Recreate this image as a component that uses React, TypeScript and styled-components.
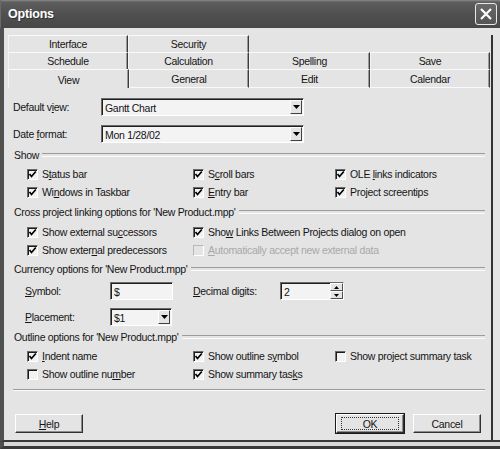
import React from "react";
import styled, { createGlobalStyle, css } from "styled-components";

const GlobalStyle = createGlobalStyle`
  html, body { margin: 0; padding: 0; background: #e4e4e4; }
  body { font-family: "Liberation Sans", Arial, sans-serif; }
  * { box-sizing: border-box; }
`;

const Window = styled.div`
  width: 500px;
  height: 449px;
  display: flex;
  flex-direction: column;
  background: #e4e4e4;
  font-family: "Liberation Sans", Arial, sans-serif;
  font-size: 10.5px;
  letter-spacing: -0.3px;
  color: #141414;
  overflow: hidden;
`;

const TitleBar = styled.div`
  height: 28px;
  flex: none;
  display: flex;
  align-items: center;
  justify-content: space-between;
  padding: 0 3px 0 7px;
  background: linear-gradient(#8a8a8a 0, #5e5e5e 2px, #515151 45%, #474747 100%);
  border-left: 1px solid #6a6a6a;
`;

const Title = styled.span`
  color: #fff;
  font-weight: bold;
  font-size: 12.5px;
  letter-spacing: -0.2px;
  text-shadow: 1px 1px 0 #333;
`;

const CloseButton = styled.div`
  width: 22px;
  height: 22px;
  border: 1px solid #e8e8e8;
  border-radius: 3px;
  background: linear-gradient(#6a6a6a, #545454);
  display: flex;
  align-items: center;
  justify-content: center;
`;

const Client = styled.div`
  flex: 1;
  display: flex;
  border-left: 4px solid #505050;
  padding: 7px 0 0 4px;
  border-bottom: 2px solid #383838;
`;

const Sheet = styled.div`
  width: 485px;
  display: flex;
  flex-direction: column;
  border-right: 2px solid #333;
`;

const BottomStrip = styled.div`
  height: 7px;
  flex: none;
  background: #d8d8d8;
  border-left: 4px solid #505050;
  border-bottom: 3px solid #3a3a3a;
`;

const TabRow = styled.div`
  display: flex;
  height: ${(p: { $h: number }) => p.$h}px;
`;

const Tab = styled.div<{ $w: number; $active?: boolean; $bottom?: boolean }>`
  width: ${(p) => p.$w}px;
  flex: none;
  display: flex;
  align-items: center;
  justify-content: center;
  background: #e4e4e4;
  border-top: 1px solid #fafafa;
  border-left: 1px solid #f4f4f4;
  border-right: 1px solid #3c3c3c;
  box-shadow: inset -1px 0 0 #9a9a9a;
  ${(p) =>
    p.$bottom &&
    css`
      border-bottom: 1px solid #fafafa;
    `}
  ${(p) =>
    p.$active &&
    css`
      padding-top: 1px;
    `}
`;

const Panel = styled.div`
  display: flex;
  flex-direction: column;
  padding: 10px 6px 0 5px;
  height: 304px;
  flex: none;
`;

const FieldRow = styled.div<{ $mt?: number }>`
  display: flex;
  align-items: center;
  height: 18px;
  margin-top: ${(p) => p.$mt ?? 0}px;
`;

const FieldLabel = styled.span<{ $w: number; $indent?: number }>`
  width: ${(p) => p.$w}px;
  padding-left: ${(p) => p.$indent ?? 0}px;
  flex: none;
`;

const Sunken = styled.div<{ $w: number }>`
  width: ${(p) => p.$w}px;
  height: 18px;
  flex: none;
  display: flex;
  align-items: center;
  background: #f3f3f3;
  border-top: 1px solid #6a6a6a;
  border-left: 1px solid #6a6a6a;
  border-right: 1px solid #fff;
  border-bottom: 1px solid #fff;
  box-shadow: inset 1px 1px 0 #202020;
  padding-left: 3px;
`;

const FieldText = styled.span`
  flex: 1;
  padding-top: 1px;
`;

const DropButton = styled.div`
  width: 12px;
  height: 14px;
  margin-right: 1px;
  flex: none;
  display: flex;
  align-items: center;
  justify-content: center;
  background: #e4e4e4;
  border-top: 1px solid #fff;
  border-left: 1px solid #fff;
  border-right: 1px solid #404040;
  border-bottom: 1px solid #404040;
`;

const SpinStack = styled.div`
  width: 13px;
  height: 16px;
  flex: none;
  display: flex;
  flex-direction: column;
`;

const SpinHalf = styled.div`
  flex: 1;
  display: flex;
  align-items: center;
  justify-content: center;
  background: #e4e4e4;
  border-top: 1px solid #fff;
  border-left: 1px solid #fff;
  border-right: 1px solid #505050;
  border-bottom: 1px solid #505050;
`;

const GroupHeader = styled.div<{ $mt: number }>`
  display: flex;
  align-items: center;
  height: 12px;
  margin-top: ${(p) => p.$mt}px;
  padding-left: 1px;
  gap: 3px;
  &::after {
    content: "";
    flex: 1;
    height: 2px;
    border-top: 1px solid #9c9c9c;
    border-bottom: 1px solid #fbfbfb;
  }
`;

const CheckGrid = styled.div<{ $mt: number; $cols?: string }>`
  display: grid;
  grid-template-columns: ${(p) => p.$cols ?? "166px 142px 1fr"};
  grid-auto-rows: 18px;
  margin-top: ${(p) => p.$mt}px;
  padding-left: 14px;
`;

const CheckItem = styled.div<{ $disabled?: boolean }>`
  display: flex;
  align-items: center;
  gap: 4px;
  color: ${(p) => (p.$disabled ? "#a8a8a8" : "#141414")};
`;

const Box = styled.div<{ $disabled?: boolean }>`
  width: 11px;
  height: 11px;
  flex: none;
  display: flex;
  align-items: center;
  justify-content: center;
  background: ${(p) => (p.$disabled ? "#e4e4e4" : "#f2f2f2")};
  border-top: 1px solid ${(p) => (p.$disabled ? "#b8b8b8" : "#6a6a6a")};
  border-left: 1px solid ${(p) => (p.$disabled ? "#b8b8b8" : "#6a6a6a")};
  border-right: 1px solid #fff;
  border-bottom: 1px solid #fff;
  box-shadow: ${(p) => (p.$disabled ? "none" : "inset 1px 1px 0 #1c1c1c")};
`;

const BottomRule = styled.div`
  margin-top: auto;
  margin-bottom: 1px;
  height: 2px;
  border-top: 1px solid #9c9c9c;
  border-bottom: 1px solid #fbfbfb;
`;

const Footer = styled.div`
  display: flex;
  align-items: flex-start;
  padding: 22px 10px 0 7px;
  gap: 9px;
`;

const Button = styled.div<{ $default?: boolean; $push?: boolean }>`
  width: 68px;
  height: 19px;
  display: flex;
  align-items: center;
  justify-content: center;
  background: #e4e4e4;
  border-top: 1px solid #fff;
  border-left: 1px solid #fff;
  border-right: 1px solid #303030;
  border-bottom: 1px solid #303030;
  box-shadow: inset -1px -1px 0 #8c8c8c;
  ${(p) =>
    p.$push &&
    css`
      margin-left: auto;
    `}
  ${(p) =>
    p.$default &&
    css`
      outline: 1px solid #1a1a1a;
      outline-offset: 0;
    `}
`;

const Focus = styled.span`
  border: 1px dotted #333;
  width: 58px;
  height: 13px;
  display: flex;
  align-items: center;
  justify-content: center;
`;

const U = styled.u`
  text-decoration: underline;
  text-underline-offset: 1px;
`;

const Arrow = () => (
  <svg width="7" height="4" viewBox="0 0 7 4">
    <path d="M0 0 H7 L3.5 4 Z" fill="#000" />
  </svg>
);

const TinyArrow = ({ up }: { up?: boolean }) => (
  <svg width="5" height="3" viewBox="0 0 5 3">
    <path d={up ? "M0 3 H5 L2.5 0 Z" : "M0 0 H5 L2.5 3 Z"} fill="#000" />
  </svg>
);

const Mark = () => (
  <svg width="9" height="9" viewBox="0 0 9 9">
    <path d="M1.5 4 L3.5 6.5 L7.8 1.5" stroke="#000" strokeWidth="1.7" fill="none" />
  </svg>
);

const Key = ({ text, k }: { text: string; k: number }) =>
  k < 0 ? (
    <>{text}</>
  ) : (
    <>
      {text.slice(0, k)}
      <U>{text[k]}</U>
      {text.slice(k + 1)}
    </>
  );

const Check = ({
  text,
  k,
  on,
  disabled,
}: {
  text: string;
  k: number;
  on?: boolean;
  disabled?: boolean;
}) => (
  <CheckItem $disabled={disabled}>
    <Box $disabled={disabled}>{on && <Mark />}</Box>
    <span>
      <Key text={text} k={k} />
    </span>
  </CheckItem>
);

const Select = ({ w, value }: { w: number; value: string }) => (
  <Sunken $w={w}>
    <FieldText>{value}</FieldText>
    <DropButton>
      <Arrow />
    </DropButton>
  </Sunken>
);

export default function App() {
  return (
    <>
      <GlobalStyle />
      <Window>
        <TitleBar>
          <Title>Options</Title>
          <CloseButton>
            <svg width="14" height="14" viewBox="0 0 14 14">
              <path d="M2 2 L12 12 M12 2 L2 12" stroke="#fff" strokeWidth="2.2" />
            </svg>
          </CloseButton>
        </TitleBar>
        <Client>
          <Sheet>
            <TabRow $h={17}>
              <Tab $w={120}>Interface</Tab>
              <Tab $w={121}>Security</Tab>
            </TabRow>
            <TabRow $h={17}>
              <Tab $w={120}>Schedule</Tab>
              <Tab $w={121}>Calculation</Tab>
              <Tab $w={121}>Spelling</Tab>
              <Tab $w={120}>Save</Tab>
            </TabRow>
            <TabRow $h={19}>
              <Tab $w={121} $active>
                View
              </Tab>
              <Tab $w={120} $bottom>
                General
              </Tab>
              <Tab $w={121} $bottom>
                Edit
              </Tab>
              <Tab $w={120} $bottom>
                Calendar
              </Tab>
            </TabRow>
            <Panel>
              <FieldRow>
                <FieldLabel $w={88}>
                  <Key text="Default view:" k={9} />
                </FieldLabel>
                <Select w={203} value="Gantt Chart" />
              </FieldRow>
              <FieldRow $mt={9}>
                <FieldLabel $w={88}>
                  <Key text="Date format:" k={5} />
                </FieldLabel>
                <Select w={203} value="Mon 1/28/02" />
              </FieldRow>

              <GroupHeader $mt={6}>Show</GroupHeader>
              <CheckGrid $mt={4}>
                <Check text="Status bar" k={1} on />
                <Check text="Scroll bars" k={1} on />
                <Check text="OLE links indicators" k={4} on />
                <Check text="Windows in Taskbar" k={2} on />
                <Check text="Entry bar" k={0} on />
                <Check text="Project screentips" k={3} on />
              </CheckGrid>

              <GroupHeader $mt={5}>Cross project linking options for 'New Product.mpp'</GroupHeader>
              <CheckGrid $mt={5} $cols="166px 1fr">
                <Check text="Show external successors" k={16} on />
                <Check text="Show Links Between Projects dialog on open" k={3} on />
                <Check text="Show external predecessors" k={10} on />
                <Check text="Automatically accept new external data" k={0} disabled />
              </CheckGrid>

              <GroupHeader $mt={4}>Currency options for 'New Product.mpp'</GroupHeader>
              <FieldRow $mt={7}>
                <FieldLabel $w={97} $indent={12}>
                  <Key text="Symbol:" k={0} />
                </FieldLabel>
                <Sunken $w={63}>
                  <FieldText>$</FieldText>
                </Sunken>
                <FieldLabel $w={107} $indent={20}>
                  <Key text="Decimal digits:" k={0} />
                </FieldLabel>
                <Sunken $w={64}>
                  <FieldText>2</FieldText>
                  <SpinStack>
                    <SpinHalf>
                      <TinyArrow up />
                    </SpinHalf>
                    <SpinHalf>
                      <TinyArrow />
                    </SpinHalf>
                  </SpinStack>
                </Sunken>
              </FieldRow>
              <FieldRow $mt={8}>
                <FieldLabel $w={97} $indent={12}>
                  <Key text="Placement:" k={0} />
                </FieldLabel>
                <Select w={62} value="$1" />
              </FieldRow>

              <GroupHeader $mt={5}>Outline options for 'New Product.mpp'</GroupHeader>
              <CheckGrid $mt={4}>
                <Check text="Indent name" k={0} on />
                <Check text="Show outline symbol" k={14} on />
                <Check text="Show project summary task" k={8} />
                <Check text="Show outline number" k={15} />
                <Check text="Show summary tasks" k={16} on />
              </CheckGrid>
              <BottomRule />
            </Panel>
            <Footer>
              <Button>
                <Key text="Help" k={0} />
              </Button>
              <Button $push $default>
                <Focus>OK</Focus>
              </Button>
              <Button>Cancel</Button>
            </Footer>
          </Sheet>
        </Client>
        <BottomStrip />
      </Window>
    </>
  );
}
